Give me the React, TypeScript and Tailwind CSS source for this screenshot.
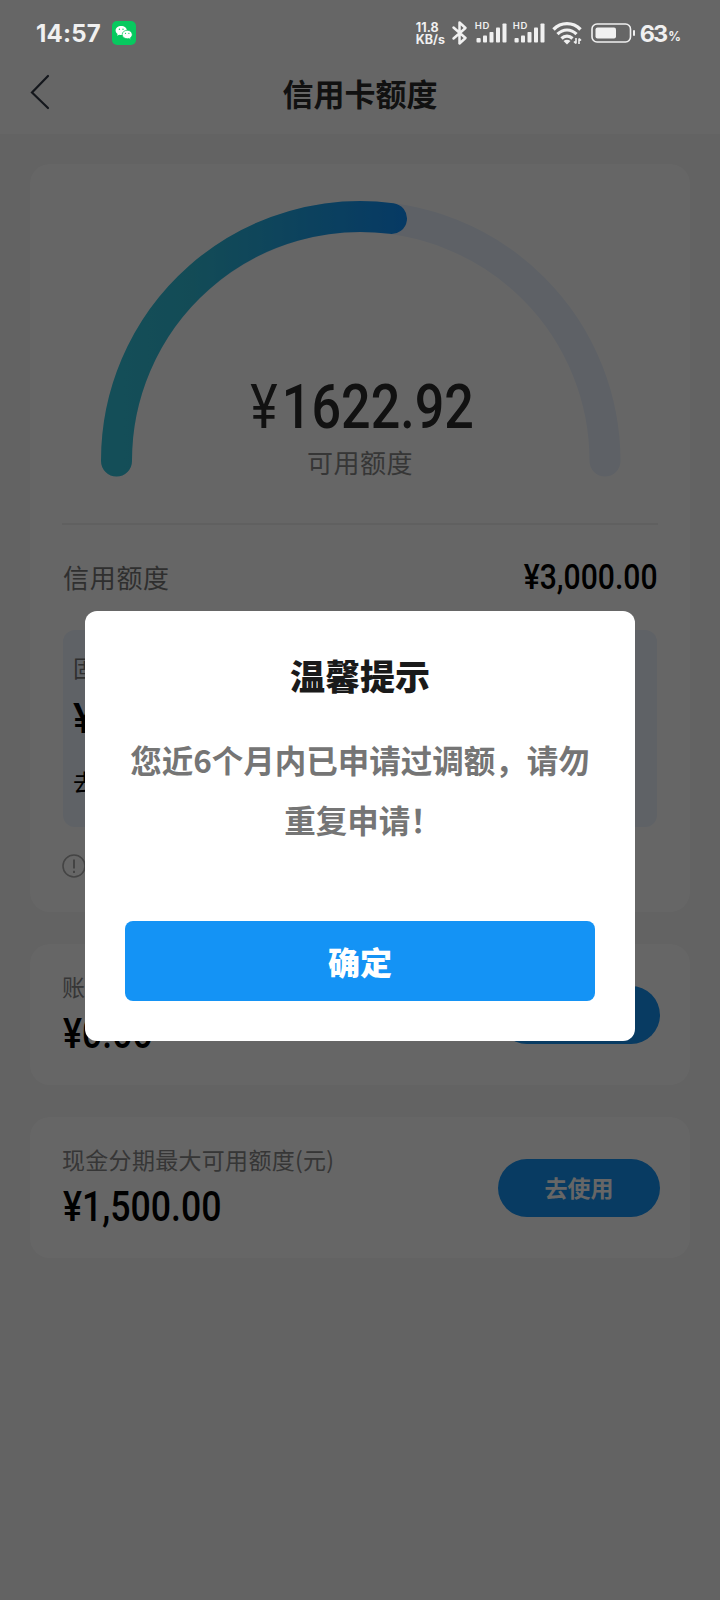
function Signal() {
  return (
    <div className="relative h-[22px] w-[32px]">
      <span className="absolute -top-px left-0 text-[9.5px] leading-[9px] font-semibold tracking-[0.5px]">HD</span>
      <svg className="absolute inset-0" width="32" height="22" viewBox="0 0 32 22" fill="#f0f0f0">
        <rect x="1.5" y="16" width="4.2" height="4.5" rx="1" />
        <rect x="8" y="13.5" width="4" height="7" rx="0.8" />
        <rect x="14.5" y="10" width="4" height="10.5" rx="0.8" />
        <rect x="21" y="5.5" width="4" height="15" rx="0.8" />
        <rect x="27.5" y="1.5" width="4" height="19" rx="0.8" />
      </svg>
    </div>
  );
}

function WeChatIcon() {
  return (
    <svg width="24" height="24" viewBox="0 0 24 24">
      <rect width="24" height="24" rx="5" fill="#07c95f" />
      <g fill="#fff">
        <path d="M9.2 5C6 5 3.6 7 3.6 9.6c0 1.5.8 2.7 2 3.5l-.5 1.7 2-1c.7.2 1.4.3 2.1.3 3.2 0 5.7-2 5.7-4.5S12.4 5 9.2 5z" />
        <path
          stroke="#07c95f"
          strokeWidth=".7"
          d="M15.2 9.3c-2.9 0-5 1.9-5 4.2s2.1 4.2 5 4.2c.6 0 1.2-.1 1.7-.2l1.9 1-.4-1.7c1.1-.8 1.8-1.9 1.8-3.2 0-2.4-2.2-4.3-5-4.3z"
        />
      </g>
      <g fill="#07c95f">
        <circle cx="7.4" cy="8.3" r=".7" />
        <circle cx="11" cy="8.3" r=".7" />
        <circle cx="13.5" cy="12.3" r=".6" />
        <circle cx="16.9" cy="12.3" r=".6" />
      </g>
    </svg>
  );
}

function StatusBar() {
  return (
    <div className="absolute inset-x-0 top-0 flex h-[66px] items-center pr-[39px] pl-[36px] font-['Inter',sans-serif] text-[#f0f0f0]">
      <span className="mt-[2px] w-[76px] text-[24px] leading-none font-bold tracking-[0.2px]">14:57</span>
      <WeChatIcon />
      <div className="ml-auto flex items-center">
        <div className="mt-[2px] w-[32px] text-[12.5px] leading-[12.5px] font-bold whitespace-nowrap">
          <div>11.8</div>
          <div>KB/s</div>
        </div>
        <svg
          className="mr-[6px] ml-[3px]"
          width="18"
          height="26"
          viewBox="0 0 18 26"
          fill="none"
          stroke="#f0f0f0"
          strokeWidth="2.5"
          strokeLinejoin="round"
          strokeLinecap="round"
        >
          <path d="M2.5 7.5l12 10.5-6 5.5v-21l6 5.5-12 10.5" />
        </svg>
        <Signal />
        <div className="w-[6px]" />
        <Signal />
        <svg className="ml-[7px]" width="30" height="24" viewBox="0 0 30 24" fill="none" stroke="#f0f0f0">
          <path strokeWidth="3.4" d="M1.5 8.5c7.5-7.8 19.5-7.8 27 0" />
          <path strokeWidth="3.2" d="M5.5 13.2c5.5-5.6 13.5-5.6 19 0" />
          <path strokeWidth="3.2" d="M9.5 17.5c3.2-3.2 7.8-3.2 11 0" />
          <path fill="#f0f0f0" stroke="none" d="M11.5 20c2.2-1.7 4.8-1.7 7 0L15 23.5z" />
          <path strokeWidth="1.6" d="M24 17v5.5m-2-2l2 2M27 23v-5.5m2 2l-2-2" />
        </svg>
        <svg className="ml-[9px]" width="45" height="20" viewBox="0 0 45 20">
          <rect x="1" y="1" width="38.5" height="18" rx="5" fill="none" stroke="#f0f0f0" strokeWidth="1.6" />
          <rect x="4.5" y="4.5" width="20.5" height="11" rx="2" fill="#f0f0f0" />
          <rect x="42" y="7" width="2" height="6" rx="1" fill="#f0f0f0" />
        </svg>
        <span className="mt-[2px] ml-[4px] text-[23.5px] leading-none font-bold tracking-[-2px]">63</span>
        <span className="mt-[8px] ml-[2px] text-[12.5px] leading-none font-bold">%</span>
      </div>
    </div>
  );
}

function NavBar() {
  return (
    <header className="flex h-[134px] items-center bg-white pt-[50px] pr-[50px] pl-[30px]">
      <svg width="20" height="36" viewBox="0 0 20 36" fill="none" stroke="#333a48" strokeWidth="2.2" strokeLinecap="round">
        <path d="M18 2L2 18.5 18 34" />
      </svg>
      <h1 className="flex-1 text-center text-[31px] leading-none font-bold text-[#2c2c2c]">信用卡额度</h1>
    </header>
  );
}

function Gauge() {
  return (
    <svg className="block" width="660" height="330" viewBox="30 164 660 330" fill="none" strokeWidth="31" strokeLinecap="round">
      <defs>
        <linearGradient id="used" gradientUnits="userSpaceOnUse" x1="101" y1="0" x2="407" y2="0">
          <stop offset="0" stopColor="#34c4dc" />
          <stop offset="0.3" stopColor="#30bcd8" />
          <stop offset="1" stopColor="#1090fa" />
        </linearGradient>
      </defs>
      <path stroke="#ebf3ff" d="M116.500 461A244 244 0 0 1 605 461" />
      <path stroke="url(#used)" d="M116.500 461A244 244 0 0 1 391.500 218.500" />
    </svg>
  );
}

function LimitCard({ label, amount }: { label: string; amount: string }) {
  return (
    <section className="flex h-[141px] items-center justify-between rounded-[20px] bg-white pr-[30px] pl-8">
      <div className="pb-[3px]">
        <p className="text-[23px] leading-[32px] tracking-[0.3px] text-[#888]">{label}</p>
        <p className="mt-[10px] ml-px font-['Roboto',sans-serif] text-[42px] leading-[44px] font-medium">
          <span className="inline-block origin-left scale-x-[0.85]">{amount}</span>
        </p>
      </div>
      <button className="h-[58px] w-[162px] rounded-full bg-[#1493f5] text-[23px] leading-none font-bold text-white">
        去使用
      </button>
    </section>
  );
}

function Dialog() {
  return (
    <div className="absolute inset-0 flex items-start justify-center bg-black/60 pt-[611px]">
      <div className="flex h-[430px] w-[550px] flex-col items-center rounded-[12px] bg-white px-10 pt-10 pb-10">
        <h2 className="text-[35px] leading-[48px] font-black text-[#1a1a1a]">温馨提示</h2>
        <div className="mt-[30px] text-center text-[31.5px] leading-[60px] font-bold whitespace-nowrap text-[#757575]">
          <p>您近6个月内已申请过调额，请勿</p>
          <p className="pl-[6px]">重复申请！</p>
        </div>
        <button className="mt-auto h-20 w-full rounded-[8px] bg-[#1493f5] text-[32px] font-black text-white">
          确定
        </button>
      </div>
    </div>
  );
}

export default function App() {
  return (
    <div className="relative h-[1600px] w-[720px] overflow-hidden bg-[#f7f7f7] font-['Noto_Sans_CJK_SC',sans-serif] text-black">
      <NavBar />
      <main className="flex flex-col gap-8 px-[30px] pt-[30px]">
        <section className="h-[748px] rounded-[20px] bg-white">
          <div className="relative">
            <Gauge />
            <div className="absolute inset-x-0 top-[211px] text-center">
              <p className="ml-[4px] font-['Roboto',sans-serif] text-[62px] leading-[64px] font-medium text-[#2c2c2c]">
                <span className="inline-block scale-x-[0.84]">
                  <span className="mr-[5px] font-normal">¥</span>
                  1622.92
                </span>
              </p>
              <p className="mt-[5px] text-[26px] leading-[36px] tracking-[0.5px] text-[#888]">可用额度</p>
            </div>
          </div>
          <div className="mx-8 mt-[29px] border-t-2 border-[#efefef]" />
          <div className="mx-8 mt-[27px] flex h-[48px] items-center justify-between">
            <span className="ml-px text-[26px] tracking-[0.7px] text-[#777]">信用额度</span>
            <span className="pt-[3px] font-['Roboto',sans-serif] text-[35px] leading-none font-medium">
              <span className="inline-block origin-right scale-x-[0.86]">¥3,000.00</span>
            </span>
          </div>
          <div className="mx-[33px] mt-[30px] h-[197px] rounded-[12px] bg-[#edf4ff] px-[10px] pt-[21px]">
            <p className="text-[23px] leading-[32px] text-[#777]">固定额度</p>
            <p className="mt-[14px] font-['Roboto',sans-serif] text-[42px] leading-[44px] font-medium">¥</p>
            <p className="mt-[24px] text-[23px] leading-[32px]">去提</p>
          </div>
          <svg className="mt-[27px] ml-[32px]" width="24" height="24" viewBox="0 0 24 24" fill="none" stroke="#aaa" strokeWidth="1.6">
            <circle cx="12" cy="12" r="11" />
            <path d="M12 5.5v9m0 2.3v2.2" strokeWidth="2" />
          </svg>
        </section>
        <LimitCard label="账单分期(元)" amount="¥0.00" />
        <LimitCard label="现金分期最大可用额度(元)" amount="¥1,500.00" />
      </main>
      <Dialog />
      <StatusBar />
    </div>
  );
}
